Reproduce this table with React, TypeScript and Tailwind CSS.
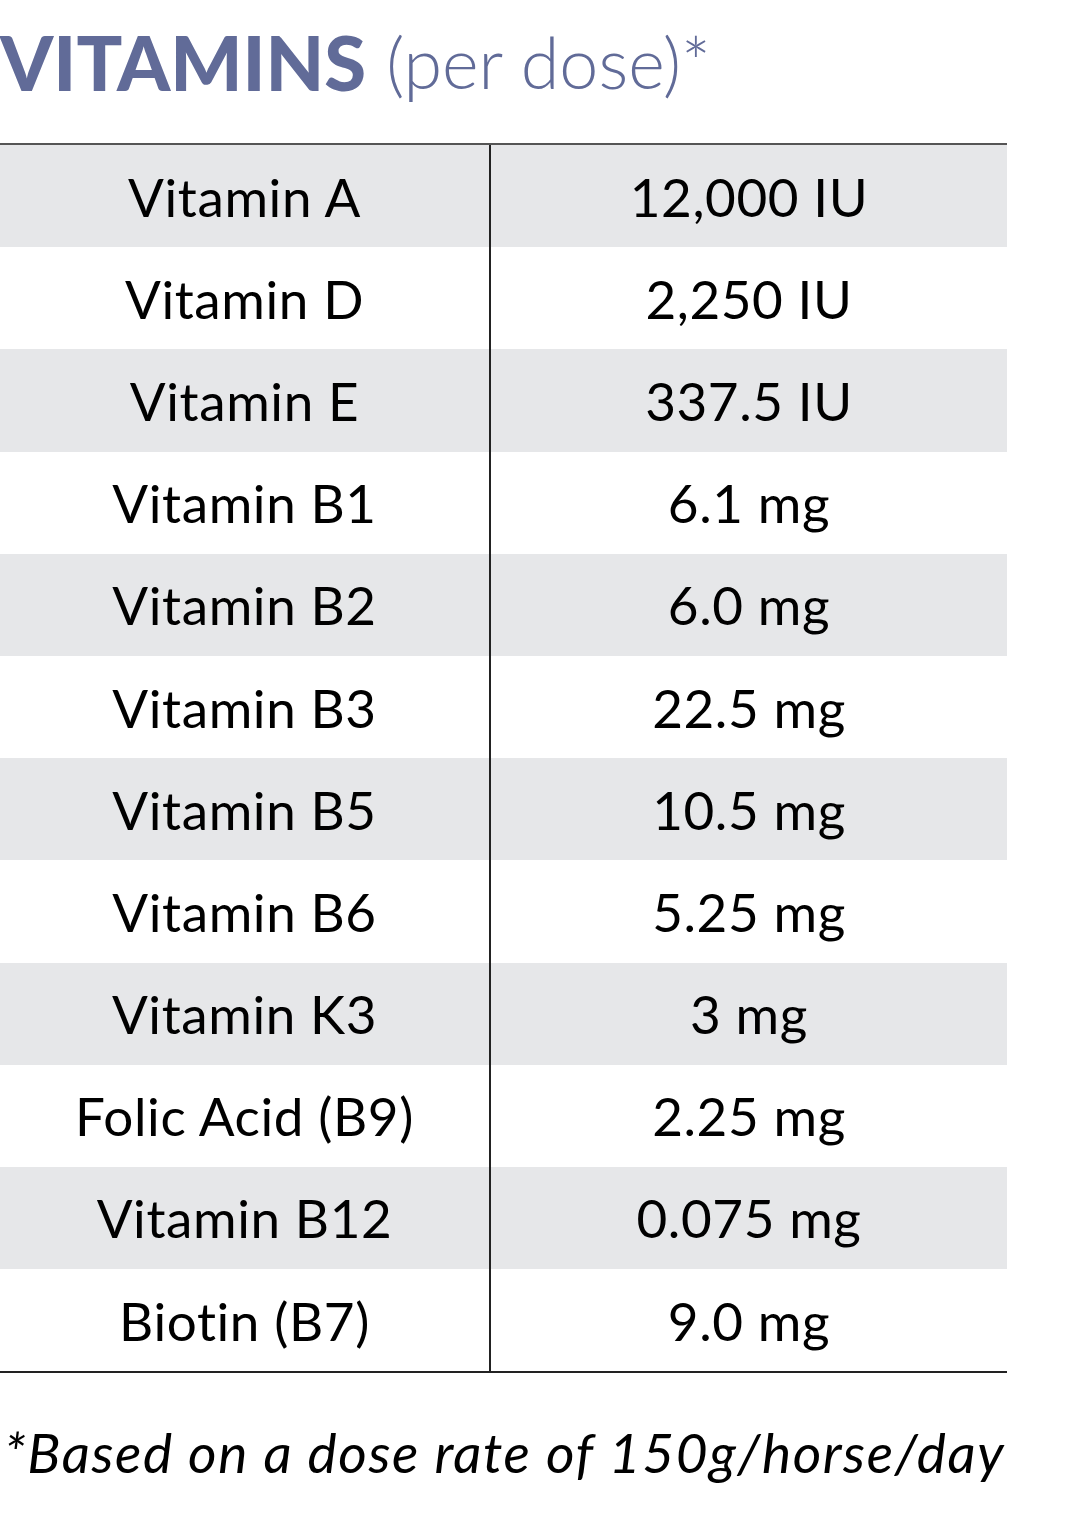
const rows: [string, string][] = [
  ["Vitamin A", "12,000 IU"],
  ["Vitamin D", "2,250 IU"],
  ["Vitamin E", "337.5 IU"],
  ["Vitamin B1", "6.1 mg"],
  ["Vitamin B2", "6.0 mg"],
  ["Vitamin B3", "22.5 mg"],
  ["Vitamin B5", "10.5 mg"],
  ["Vitamin B6", "5.25 mg"],
  ["Vitamin K3", "3 mg"],
  ["Folic Acid (B9)", "2.25 mg"],
  ["Vitamin B12", "0.075 mg"],
  ["Biotin (B7)", "9.0 mg"],
];

export default function App() {
  return (
    <div className="min-h-[1526px] w-[1079px] bg-white font-['Lato',sans-serif] text-black">
      <h1 className="flex h-[143px] items-center pb-[20px] leading-none text-[#616b98]">
        <span className="text-[76px] font-black">VITAMINS</span>
        <span className="ml-[20px] text-[70px] font-light">(per dose)*</span>
      </h1>
      <div className="w-[1007px] border-y-2 border-t-[#555555] border-b-[#222222]">
        {rows.map(([name, amount], i) => (
          <div
            key={name}
            className={`flex h-[102.2px] items-center text-[53px] leading-none tracking-[0.6px] ${i % 2 === 0 ? "bg-[#e6e7e9]" : "bg-white"}`}
          >
            <div className="flex h-full w-[491px] items-center justify-center border-r-2 border-[#222222]">
              {name}
            </div>
            <div className="flex h-full flex-1 items-center justify-center">{amount}</div>
          </div>
        ))}
      </div>
      <p className="mt-[52px] pl-[4px] text-[55px] italic leading-none tracking-[1.6px]">
        *Based on a dose rate of 150g/horse/day
      </p>
    </div>
  );
}
